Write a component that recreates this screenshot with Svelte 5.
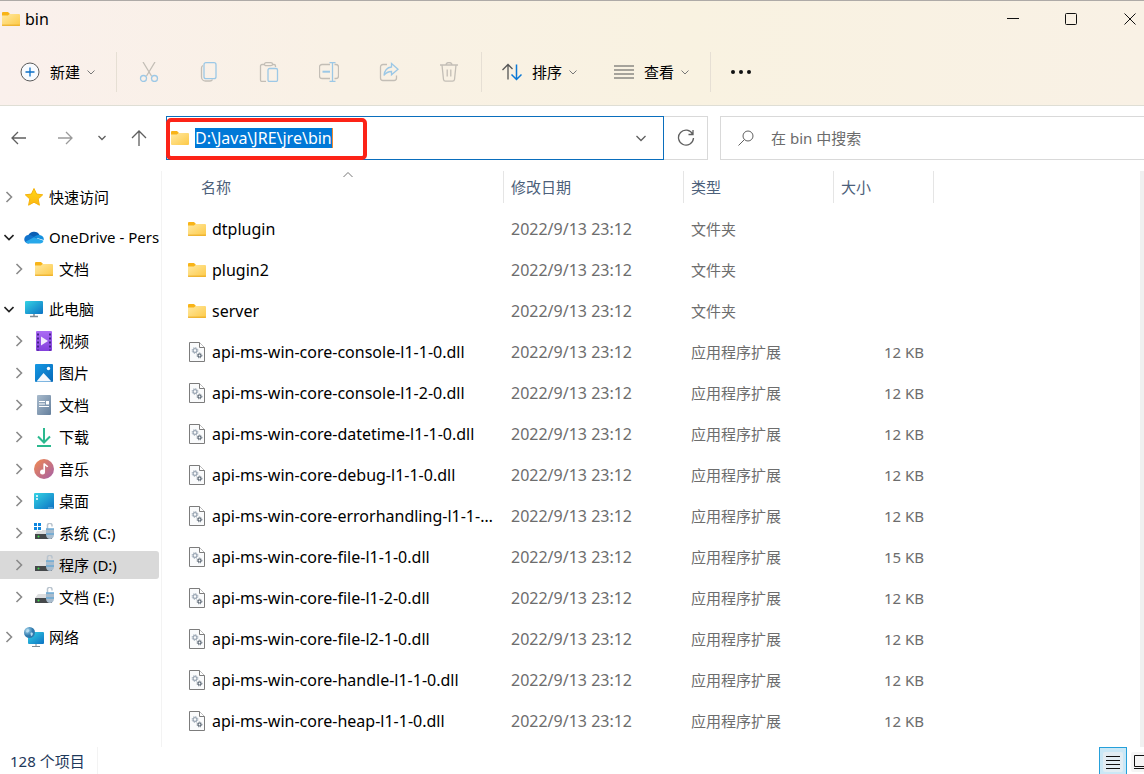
<script>
  const places = [
    { name: "快速访问", icon: "star", level: 0 },
    { name: "OneDrive - Pers", icon: "cloud", level: 0, open: true },
    { name: "文档", icon: "folder", level: 1 },
    { name: "此电脑", icon: "pc", level: 0, open: true },
    { name: "视频", icon: "video", level: 1 },
    { name: "图片", icon: "picture", level: 1 },
    { name: "文档", icon: "document", level: 1 },
    { name: "下载", icon: "download", level: 1 },
    { name: "音乐", icon: "music", level: 1 },
    { name: "桌面", icon: "desktop", level: 1 },
    { name: "系统 (C:)", icon: "system", level: 1 },
    { name: "程序 (D:)", icon: "drive", level: 1 },
    { name: "文档 (E:)", icon: "drive", level: 1 },
    { name: "网络", icon: "network", level: 0 },
  ];

  const folders = ["dtplugin", "plugin2", "server"];
  const libs = [
    ["console-l1-1-0", 12],
    ["console-l1-2-0", 12],
    ["datetime-l1-1-0", 12],
    ["debug-l1-1-0", 12],
    ["errorhandling-l1-1-0", 12],
    ["file-l1-1-0", 15],
    ["file-l1-2-0", 12],
    ["file-l2-1-0", 12],
    ["handle-l1-1-0", 12],
    ["heap-l1-1-0", 12],
  ];

  const files = [
    ...folders.map((name) => ({ name, type: "文件夹", size: "" })),
    ...libs.map(([name, kb]) => ({
      name: `api-ms-win-core-${name}.dll`,
      type: "应用程序扩展",
      size: `${kb} KB`,
    })),
  ];

  let selected = $state("程序 (D:)");
  let path = $state("D:\\Java\\JRE\\jre\\bin");
</script>

{#snippet folder()}
  <svg class="icon" width="20" height="20" viewBox="0 0 20 20">
    <path d="M1 4a1 1 0 0 1 1-1h5l2 2v4H1z" fill="#f8b418" />
    <path d="M1 6.600h6L8.600 5H18a1 1 0 0 1 1 1v10a1 1 0 0 1-1 1H2a1 1 0 0 1-1-1z" fill="url(#gold)" />
    <path d="M1 16.200h18" stroke="#e8a820" />
  </svg>
{/snippet}

{#snippet dll()}
  <svg class="icon" width="20" height="20" viewBox="0 0 20 20">
    <path d="M2.500.5h10l5 5v14h-15z" fill="#fafbfc" stroke="#7c7c7c" />
    <path d="M12.500.5v5h5" fill="#fff" stroke="#7c7c7c" />
    <circle cx="8" cy="8.500" r="1.900" fill="none" stroke="#9ba7b4" stroke-width="1.200" />
    <circle cx="8" cy="8.500" r="2.900" fill="none" stroke="#9ba7b4" stroke-width="1" stroke-dasharray="1.200 1.077" />
    <circle cx="12.500" cy="13.500" r="1.500" fill="none" stroke="#5f6b78" stroke-width="1.200" />
    <circle cx="12.500" cy="13.500" r="2.400" fill="none" stroke="#5f6b78" stroke-width="1" stroke-dasharray="1 0.885" />
  </svg>
{/snippet}

{#snippet chevron()}
  <svg class="chevron" width="10" height="10" viewBox="0 0 10 10"><path d="M1.500 3.500 5 7l3.500-3.500" /></svg>
{/snippet}

{#snippet drive()}
  <path d="M4 7h11l4 4H1z" fill="#dcdddf" />
  <path d="M1 11h17v5H1z" fill="#45484b" />
  <circle cx="4.500" cy="13.500" r="1" fill="#3fe04a" />
  <path d="M13.500 6V3a2.300 2.300 0 0 1 4.500-1V3.500" fill="none" stroke="#b9c4ce" stroke-width="1.500" />
  <path d="M12 5.500h8v6c0 3-2 4.500-4 4.500s-4-1.500-4-4.500z" fill="#a9bccd" />
  <path d="M12 6h8M12 11h8" stroke="#4a9fd8" />
{/snippet}

{#snippet placeIcon(kind)}
  {#if kind === "folder"}
    {@render folder()}
  {:else}
    <svg class="icon" width="20" height="20" viewBox="0 0 20 20">
      {#if kind === "star"}
        <path
          d="m10 1.500 2.600 5.600 6.100.7-4.500 4.200 1.200 6.200L10 15.200l-5.400 3 1.200-6.200L1.300 7.800l6.100-.7z"
          fill="url(#star)" stroke="#f6b30c" stroke-linejoin="round"
        />
      {:else if kind === "cloud"}
        <path d="M4 9.500A6.200 6.200 0 0 1 15.500 8l-3 4z" fill="#0a5fb4" />
        <path d="M4.500 8c2-.2 3 .3 5 1.600l4 2.400-9 4.500A4.200 4.200 0 0 1 4.500 8z" fill="#1173cc" />
        <path d="M9.800 10c2-1.400 3.500-2.300 5.700-2a4.500 4.500 0 0 1 4.300 5z" fill="#1490df" />
        <path d="M1.500 14.800 10 10.200l9.600 3.600a3.500 3.500 0 0 1-3.300 2.700h-12a4.200 4.200 0 0 1-2.800-1.700z" fill="#28a8ea" />
      {:else if kind === "pc"}
        <rect x="1" y="2" width="18" height="13" rx="1" fill="url(#screen)" />
        <path d="M10 15v2.500M6 17.500h8" stroke="#7d8a94" stroke-width="1.500" />
      {:else if kind === "video"}
        <rect x="2" y="0" width="16" height="20" rx="1" fill="url(#violet)" />
        <path d="M4 2.500v17M16 2.500v17" stroke="#45238a" stroke-width="2" stroke-dasharray="2 2" />
        <path d="m7 5.500 7 4.500-7 4.500z" fill="#f2ecfc" />
      {:else if kind === "picture"}
        <rect x="1" y="1" width="18" height="18" rx="1" fill="url(#blue)" />
        <path d="m2.500 18.500 7-8.500 8 8.500z" fill="#f3f8fd" />
        <circle cx="14.500" cy="5.500" r="1.700" fill="#fff" />
      {:else if kind === "document"}
        <rect x="3" y="0" width="14" height="20" rx="1" fill="url(#slate)" />
        <path d="M5 6.500h6M5 9h6M5 11.500h10" stroke="#fff" stroke-width="1.200" />
        <rect x="12" y="6" width="3" height="3.500" fill="#fff" />
      {:else if kind === "download"}
        <path d="M10 1v14M4 9.500l6 6 6-6" fill="none" stroke="#2bb98f" stroke-width="2" />
        <path d="M3 19h14" stroke="#2bb98f" stroke-width="2" />
      {:else if kind === "music"}
        <circle cx="10" cy="10" r="10" fill="url(#sunset)" />
        <circle cx="8.500" cy="13" r="2.500" fill="#fff" />
        <path d="M10.200 13V4.500c.8 2 2.800 1.800 3.300 3.500" fill="none" stroke="#fff" stroke-width="1.700" />
      {:else if kind === "desktop"}
        <rect x="0" y="2" width="20" height="16" rx="1" fill="url(#screen)" />
        <path d="M2 5h2M2 8h2" stroke="#fff" stroke-width="1.700" />
        <path d="M14.500 17h4.500" stroke="#fff" stroke-dasharray="1 1" />
      {:else if kind === "drive"}
        {@render drive()}
      {:else if kind === "system"}
        {@render drive()}
        <path d="M0 0h8v8H0z" fill="#fff" />
        <path d="M0 0h3v3H0zM4 0h3v3H4zM0 4h3v3H0zM4 4h3v3H4z" fill="#0d86df" />
      {:else if kind === "network"}
        <rect x="4" y="5" width="16" height="12" rx="1" fill="url(#screen)" />
        <path d="M12 17v2.500M8 19.500h8" stroke="#7d8a94" />
        <circle cx="5.500" cy="5.500" r="5.500" fill="url(#globe)" />
        <path d="M3 2.500c2-1 3 1 2 2S2.500 6 2 4.500zM6.500 6c2-1 3 0 2 2s-2 1-2-2z" fill="#b6dcf0" />
      {/if}
    </svg>
  {/if}
{/snippet}

<svg class="defs" width="0" height="0" aria-hidden="true">
  <defs>
    <linearGradient id="gold" x2="1" y2="1">
      <stop stop-color="#ffe9a2" /><stop offset="1" stop-color="#fdc946" />
    </linearGradient>
    <linearGradient id="star" x2="0" y2="1">
      <stop stop-color="#ffd815" /><stop offset="1" stop-color="#fcb714" />
    </linearGradient>
    <linearGradient id="screen" x2="1" y2="1">
      <stop stop-color="#34d3e4" /><stop offset="1" stop-color="#0c72c4" />
    </linearGradient>
    <linearGradient id="violet" x2="0" y2="1">
      <stop stop-color="#ab6cf4" /><stop offset="1" stop-color="#8340dc" />
    </linearGradient>
    <linearGradient id="blue" x2="1" y2="1">
      <stop stop-color="#1599e4" /><stop offset="1" stop-color="#0668b8" />
    </linearGradient>
    <linearGradient id="slate" x2="1" y2="1">
      <stop stop-color="#a9bbcd" /><stop offset="1" stop-color="#647f9c" />
    </linearGradient>
    <linearGradient id="sunset" x2="1" y2="1">
      <stop stop-color="#f28a4f" /><stop offset="1" stop-color="#a45fa8" />
    </linearGradient>
    <radialGradient id="globe" cx="0.3" cy="0.3">
      <stop stop-color="#a8d8ee" /><stop offset="1" stop-color="#2f79ad" />
    </radialGradient>
  </defs>
</svg>

<div class="window">
  <header>
    <div class="titlebar">
      <h1>{@render folder()}bin</h1>
      <button aria-label="最小化">
        <svg width="12" height="12"><path d="M0 5.500h12" /></svg>
      </button>
      <button aria-label="最大化">
        <svg width="12" height="12"><rect x="0.500" y="0.500" width="11" height="11" rx="1" /></svg>
      </button>
      <button aria-label="关闭">
        <svg width="12" height="12"><path d="m.5.5 11 11M11.500.5l-11 11" /></svg>
      </button>
    </div>

    <div class="toolbar">
      <button class="command new">
        <svg width="20" height="20" viewBox="0 0 20 20">
          <circle cx="10" cy="10" r="9" fill="#f8fbff" stroke="#5b5b5b" />
          <path d="M10 5.500v9M5.500 10h9" stroke="#0a6fc8" stroke-width="1.300" />
        </svg>
        新建
        {@render chevron()}
      </button>
      <span class="rule"></span>
      <button class="tool" aria-label="剪切" disabled>
        <svg width="20" height="20" viewBox="0 0 20 20">
          <path d="M4 0l8.500 14M16 0 7.500 14" class="grey" />
          <circle cx="4.500" cy="16.500" r="3" class="blue" />
          <circle cx="15.500" cy="16.500" r="3" class="blue" />
        </svg>
      </button>
      <button class="tool" aria-label="复制" disabled>
        <svg width="20" height="20" viewBox="0 0 20 20">
          <path d="M4 3.500C2.800 4 2.500 4.700 2.500 6v9a4 4 0 0 0 4 4H11c1.300 0 2-.4 2.500-1.500" class="grey" />
          <rect x="5" y="0.700" width="12" height="16" rx="2" class="blue" />
        </svg>
      </button>
      <button class="tool" aria-label="粘贴" disabled>
        <svg width="20" height="20" viewBox="0 0 20 20">
          <path d="M5.500 2.500H3A1.500 1.500 0 0 0 1.500 4v14A1.500 1.500 0 0 0 3 19.500h4M13.500 2.500H15A1.500 1.500 0 0 1 16.500 4v1" class="grey" />
          <rect x="5.500" y="0.700" width="8" height="3" rx="1.500" class="grey" />
          <rect x="9" y="6.500" width="9.500" height="13" rx="1.500" class="blue" />
        </svg>
      </button>
      <button class="tool" aria-label="重命名" disabled>
        <svg width="20" height="20" viewBox="0 0 20 20">
          <path d="M11 2.500H3A2.500 2.500 0 0 0 .5 5v9A2.500 2.500 0 0 0 3 16.500h8M15.500 2.500H17A2.500 2.500 0 0 1 19.500 5v9a2.500 2.500 0 0 1-2.500 2.500h-1.500" class="grey" />
          <path d="M13.500.7v18.600M10.500.7h6M10.500 19.300h6" class="blue" />
          <path d="M3.500 9.700H11" class="blue thick" />
        </svg>
      </button>
      <button class="tool" aria-label="共享" disabled>
        <svg width="20" height="20" viewBox="0 0 20 20">
          <path d="M8 2.500H4A2.500 2.500 0 0 0 1.500 5v11A2.500 2.500 0 0 0 4 18.500h11a2.500 2.500 0 0 0 2.500-2.500v-2.500" class="grey" />
          <path d="M12.500 1.500 19 7.200l-6.500 5.600V9.500c-3.500 0-5.500 1-7.500 4 .5-5 3-8 7.500-8.500z" class="blue" />
        </svg>
      </button>
      <button class="tool" aria-label="删除" disabled>
        <svg width="20" height="20" viewBox="0 0 20 20">
          <path d="M1 3h18M7 3a3 2.500 0 0 1 6 0M3 3l1.500 14.500a2 2 0 0 0 2 1.700h7a2 2 0 0 0 2-1.700L17 3M8.200 7.500v7M11.800 7.500v7" class="grey" />
        </svg>
      </button>
      <span class="rule"></span>
      <button class="command">
        <svg width="20" height="20" viewBox="0 0 20 20">
          <path d="M6 17.500V2.500M.5 8 6 2.500 10.500 7" fill="none" stroke="#555" stroke-width="1.300" />
          <path d="M14.500 2.500v15M9.500 12.500l5 5 5-5" fill="none" stroke="#0a78d6" stroke-width="1.500" />
        </svg>
        排序
        {@render chevron()}
      </button>
      <button class="command">
        <svg width="20" height="20" viewBox="0 0 20 20">
          <path d="M0 4h20M0 8h20M0 12h20M0 16h20" stroke="#555" stroke-width="1.200" />
        </svg>
        查看
        {@render chevron()}
      </button>
      <span class="rule"></span>
      <button class="command" aria-label="更多">
        <svg width="20" height="20" viewBox="0 0 20 20">
          <circle cx="2" cy="10" r="2" /><circle cx="10" cy="10" r="2" /><circle cx="18" cy="10" r="2" />
        </svg>
      </button>
    </div>
  </header>

  <div class="navbar">
    <nav>
      <button aria-label="后退">
        <svg width="16" height="16"><path d="M15 8H1.500M7 2 1 8l6 6" /></svg>
      </button>
      <button aria-label="前进" disabled>
        <svg width="16" height="16"><path d="M1 8h13.500M9 2l6 6-6 6" /></svg>
      </button>
      <button class="small" aria-label="最近浏览的位置">
        <svg width="10" height="10"><path d="M1.500 3 5 6.500 8.500 3" /></svg>
      </button>
      <button aria-label="上移">
        <svg width="16" height="16"><path d="M8 16V1M1 8l7-7 7 7" /></svg>
      </button>
    </nav>
    <div class="address">
      {@render folder()}
      <input aria-label="地址" bind:value={path} size="16" spellcheck="false" />
      <button aria-label="以前的位置">
        <svg width="10" height="10"><path d="M.5 3 5 7.500 9.500 3" /></svg>
      </button>
      <div class="mark"></div>
    </div>
    <button class="refresh" aria-label="刷新">
      <svg width="18" height="18">
        <path d="M15.700 5.200A7.500 7.500 0 1 0 16.500 9M16 1v4.500h-4.500" />
      </svg>
    </button>
    <label class="search">
      <svg width="16" height="16"><circle cx="10" cy="6" r="5" /><path d="M6.500 9.500.5 15.500" /></svg>
      <input type="search" aria-label="搜索" placeholder="在 bin 中搜索" />
    </label>
  </div>

  <div class="body">
    <ul class="places">
      {#each places as place}
        <li class:child={place.level} class:selected={place.name === selected}>
          <a href="#place" onclick={() => (selected = place.name)}>
            <svg class="twist" class:open={place.open} width="10" height="12" viewBox="0 0 10 12">
              {#if place.open}
                <path d="m0.500 4 4.500 4.500L9.500 4" />
              {:else}
                <path d="m2.500 1 5 5-5 5" />
              {/if}
            </svg>
            {@render placeIcon(place.icon)}
            <span>{place.name}</span>
          </a>
        </li>
      {/each}
    </ul>

    <main>
      <table>
        <thead>
          <tr>
            <th class="name">
              <div>名称</div>
              <svg class="sort" width="10" height="6"><path d="M.5 5 5 .5 9.500 5" /></svg>
            </th>
            <th class="date"><div>修改日期</div></th>
            <th class="type"><div>类型</div></th>
            <th class="size"><div>大小</div></th>
          </tr>
        </thead>
        <tbody>
          {#each files as file}
            <tr>
              <td class="name">
                <div>
                  {#if file.size}{@render dll()}{:else}{@render folder()}{/if}
                  <span>{file.name}</span>
                </div>
              </td>
              <td class="date">2022/9/13 23:12</td>
              <td>{file.type}</td>
              <td class="size">{file.size}</td>
            </tr>
          {/each}
        </tbody>
      </table>
    </main>
    <div class="scrollbar"></div>
  </div>

  <footer>
    <span class="count">128 个项目</span>
    <button class="active" aria-label="详细信息">
      <svg width="20" height="20">
        <rect width="20" height="20" rx="2" fill="#e3edf3" stroke="none" />
        <path d="M3 4.500h14M3 8.500h14M3 12.500h14M3 16.500h14" />
      </svg>
    </button>
    <button aria-label="大图标">
      <svg width="20" height="20">
        <rect width="20" height="20" rx="2" fill="#f5f5f5" stroke="none" />
        <path d="M3.500 3.500h13v11h-13zM3 16.500h14" />
      </svg>
    </button>
  </footer>
</div>

<style>
  :global(body) {
    background: #fff;
  }

  .window {
    height: 100vh;
    display: flex;
    flex-direction: column;
    overflow: hidden;
    color: #000;
    font: 15px/20px "Noto Sans", "Noto Sans CJK SC", sans-serif;
  }

  .defs {
    position: absolute;
  }

  button {
    padding: 0;
    border: 0;
    background: none;
    color: inherit;
    font: inherit;
    display: flex;
    align-items: center;
    justify-content: center;
    flex-shrink: 0;
  }

  button svg {
    fill: none;
    stroke: #111;
  }

  input {
    border: 0;
    padding: 0;
    background: none;
    font: inherit;
    outline: none;
    min-width: 0;
  }

  .icon {
    flex-shrink: 0;
  }

  header {
    border-top: 1px solid #aeaaa7;
    border-bottom: 1px solid #dfded5;
    background: linear-gradient(90deg, #faf0ec, #f9f1e5 30%, #f9f2e1 60%, #f9f1e5);
  }

  .titlebar {
    display: flex;
    height: 36px;
  }

  h1 {
    flex: 1;
    display: flex;
    align-items: center;
    gap: 4px;
    margin: 0;
    padding-left: 1px;
    font-size: 16px;
    font-weight: 400;
  }

  .titlebar button {
    width: 58px;
  }

  .titlebar button:last-child {
    width: 60px;
    margin-right: -16px;
  }

  .toolbar {
    display: flex;
    align-items: center;
    height: 66px;
    padding: 2px 0 0 20px;
  }

  .command {
    gap: 10px;
    margin: 0 20px;
  }

  .command + .command {
    margin-left: 16px;
  }

  .command.new {
    margin-left: 0;
  }

  .command svg {
    stroke: none;
    fill: #111;
  }

  .command .chevron {
    margin-left: -4px;
    fill: none;
    stroke: #777;
  }

  .rule {
    width: 1px;
    height: 40px;
    background: #e6dfd4;
  }

  .tool {
    width: 60px;
    height: 40px;
  }

  .rule + .tool {
    margin-left: 2px;
  }

  .tool + .rule {
    margin-left: 2px;
  }

  .tool svg {
    stroke-width: 1.3px;
  }

  .tool .grey {
    stroke: #c3beb6;
  }

  .tool .blue {
    stroke: #9cc8e6;
  }

  .tool .thick {
    stroke-width: 2px;
  }

  .navbar {
    display: flex;
    padding: 10px 0 11px;
  }

  nav {
    display: flex;
    align-items: center;
    gap: 30px;
    width: 155px;
    padding-left: 11px;
  }

  .navbar svg {
    fill: none;
    stroke: #5f5f5f;
    stroke-width: 1.3px;
  }

  nav button:disabled svg {
    stroke: #9a9a9a;
  }

  nav .small {
    margin: 0 -6px;
  }

  .address {
    position: relative;
    display: flex;
    align-items: center;
    flex: 493 1 0;
    height: 42px;
    border: 1px solid #0a6ebd;
    padding-left: 3px;
  }

  .address .icon {
    stroke: none;
    margin-right: 5px;
  }

  .address .icon path {
    stroke-width: 0;
  }

  .address input {
    field-sizing: content;
    height: 20px;
    background: #0078d7;
    border-right: 1px solid #f08a30;
    color: #fff;
    font-size: 16px;
  }

  .address button {
    width: 44px;
    margin-left: auto;
  }

  /* red highlighter frame drawn over the path */
  .mark {
    position: absolute;
    left: -1px;
    top: 1px;
    width: 193px;
    height: 34px;
    border: 4px solid #fc2317;
    border-radius: 5px;
    pointer-events: none;
  }

  .refresh {
    width: 44px;
    border: 1px solid #d9d9d9;
    border-left: 0;
  }

  .search {
    display: flex;
    align-items: center;
    flex: 406 1 0;
    margin-left: 12px;
    border: 1px solid #d9d9d9;
    border-right: 0;
    padding-left: 17px;
    gap: 17px;
  }

  .search svg {
    stroke-width: 1px;
  }

  .search input {
    flex: 1;
  }

  .search input::placeholder {
    color: #6b6b6b;
  }

  .body {
    flex: 1;
    display: flex;
    min-height: 0;
  }

  .places {
    flex: none;
    display: flex;
    flex-direction: column;
    gap: 4px;
    width: 159px;
    margin: 0;
    padding: 4px 2px 0 0;
    border-right: 1px solid #f3f3f3;
    list-style: none;
    overflow: hidden;
  }

  .places li {
    margin-top: 8px;
    border-radius: 0 3px 3px 0;
  }

  .places .child {
    margin-top: 0;
  }

  .places a {
    display: flex;
    align-items: center;
    height: 28px;
    padding-left: 4px;
    color: inherit;
    text-decoration: none;
    white-space: nowrap;
  }

  .places .child a {
    padding-left: 14px;
  }

  .places .icon {
    margin: 0 5px 0 10px;
  }

  .selected {
    background: #d9d9d9;
  }

  .twist {
    flex-shrink: 0;
    fill: none;
    stroke: #8a8a8a;
    stroke-width: 1.6px;
  }

  .twist.open {
    stroke: #222;
  }

  main {
    flex: 1;
    min-width: 0;
    overflow: hidden;
  }

  table {
    table-layout: fixed;
    width: 772px;
    border-collapse: collapse;
  }

  th {
    position: relative;
    padding: 0 0 5px;
    font-weight: 400;
    text-align: left;
    color: #4c607a;
  }

  th div {
    height: 32px;
    line-height: 32px;
    padding-left: 7px;
    border-right: 1px solid #e5e5e5;
  }

  th.name {
    width: 342px;
  }

  th.name div {
    padding-left: 39px;
  }

  th.date {
    width: 180px;
  }

  th.type {
    width: 150px;
  }

  .sort {
    position: absolute;
    left: 181px;
    top: 1px;
    fill: none;
    stroke: #777;
  }

  td {
    height: 41px;
    padding: 0 10px 0 7px;
    color: #6d6d6d;
  }

  td.name {
    padding: 0 10px 0 25px;
    color: #000;
  }

  td.name,
  td.date {
    font-size: 16px;
  }

  td.name div {
    display: flex;
    align-items: center;
    gap: 5px;
  }

  td.name span {
    overflow: hidden;
    text-overflow: ellipsis;
    white-space: nowrap;
  }

  td.size {
    text-align: right;
  }

  .scrollbar {
    width: 4px;
    background: #f0f0f0;
  }

  footer {
    display: flex;
    height: 27px;
    overflow: hidden;
  }

  .count {
    margin-right: auto;
    padding: 4px 12px 0 10px;
    border-right: 1px solid #f3f3f3;
    color: #1e395b;
  }

  footer button {
    width: 28px;
    height: 30px;
    border: 1px solid transparent;
  }

  footer .active {
    border-color: #26a0da;
    background: #cbe8f6;
  }

  footer button:last-child {
    margin-right: -11px;
  }
</style>
